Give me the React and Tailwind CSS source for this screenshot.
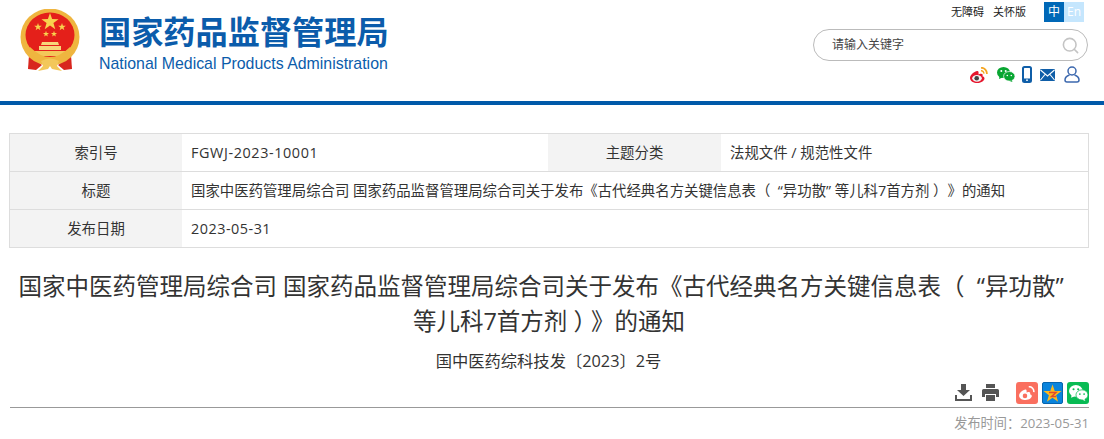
import React from 'react';
import { Search } from 'lucide-react';

const BASE = "font-['Open_Sans','Noto_Sans_CJK_SC',sans-serif]";

// points of a five pointed star
const star = (cx, cy, r) => {
  const pts = [];
  for (let i = 0; i < 10; i++) {
    const a = -Math.PI / 2 + (i * Math.PI) / 5;
    const d = i % 2 === 0 ? r : r * 0.4;
    pts.push(`${cx + d * Math.cos(a)},${cy + d * Math.sin(a)}`);
  }
  return pts.join(' ');
};

// --- Emblem ---
const Emblem = () => (
  <svg width="60" height="64" viewBox="0 0 60 64" className="shrink-0">
    <path d="M9 46 L8 60 L16 61 L22 56 Z" fill="#d8261e" />
    <path d="M51 46 L52 60 L44 61 L38 56 Z" fill="#d8261e" />
    <ellipse cx="30" cy="28" rx="29.5" ry="28.5" fill="#efb53f" />
    <ellipse cx="30" cy="26" rx="24.5" ry="22.5" fill="#e4201a" />
    <polygon points={star(30, 13, 9)} fill="#f8d24e" />
    <polygon points={star(18, 18, 4)} fill="#f8d24e" />
    <polygon points={star(42, 18, 4)} fill="#f8d24e" />
    <polygon points={star(26, 25, 3.2)} fill="#f8d24e" />
    <polygon points={star(34, 25, 3.2)} fill="#f8d24e" />
    <path d="M22 33 H38 L39 36 H21 Z" fill="#f7d77a" />
    <path d="M19 37 H41 V41 H19 Z" fill="#f7d77a" />
    <path d="M10 42 H50 L46 47 H14 Z" fill="#f3c75a" />
    <path d="M7 42 Q30 66 53 42 L50 38 Q30 58 10 38 Z" fill="#efb53f" />
    <path d="M21 52 Q30 47 39 52 L37 57 L42 62 L32 60 L30 57 L28 60 L18 62 L23 57 Z" fill="#f3c75a" />
  </svg>
);

const Weibo = () => (
  <svg width="18" height="16" viewBox="0 0 18 16">
    <path d="M7 4 C3 5 0 8.500 0 11 C0 14 3.500 16 7.500 16 C11.500 16 14.500 13.500 14.500 11.500 C14.500 9.800 13 9.500 12.500 9.300 C13 8 12.800 6.800 11 6.800 C10 6.800 9 7.300 8.500 7.500 C8.800 5.500 8.600 3.600 7 4 Z" fill="#e6162d" />
    <ellipse cx="7" cy="11.300" rx="4.800" ry="3.400" fill="#f4f4f4" />
    <circle cx="6.700" cy="11.300" r="2.300" fill="#444" />
    <path d="M11 .8 A5.500 5.500 0 0 1 16.800 7" stroke="#f5a623" strokeWidth="1.800" fill="none" />
    <path d="M11 3.800 A2.500 2.500 0 0 1 13.800 6.600" stroke="#f5a623" strokeWidth="1.500" fill="none" />
  </svg>
);

const Wechat = ({ w = 18, h = 15, color = '#09a632', eye = '#fff' }) => (
  <svg width={w} height={h} viewBox="0 0 18 15">
    <ellipse cx="6.500" cy="5.500" rx="6.500" ry="5.500" fill={color} />
    <path d="M2.500 9 L2 12 L5.500 10.500 Z" fill={color} />
    <ellipse cx="12.300" cy="9.300" rx="5.700" ry="4.800" fill={color} stroke={eye} strokeWidth="0.700" />
    <path d="M14.500 13 L15.500 15 L12.500 14 Z" fill={color} />
    <circle cx="4.300" cy="4" r="1" fill={eye} />
    <circle cx="8.700" cy="4" r="1" fill={eye} />
    <circle cx="10.300" cy="8.500" r="0.800" fill={eye} />
    <circle cx="14.300" cy="8.500" r="0.800" fill={eye} />
  </svg>
);

const Phone = () => (
  <svg width="10" height="17" viewBox="0 0 10 17">
    <rect x="1" y="1" width="8" height="15" rx="1.500" fill="none" stroke="#0f5ea8" strokeWidth="2" />
    <rect x="1" y="12.500" width="8" height="3.500" fill="#0f5ea8" />
    <circle cx="5" cy="14.200" r="0.900" fill="#fff" />
  </svg>
);

const MailIcon = () => (
  <svg width="15" height="12" viewBox="0 0 15 12">
    <rect width="15" height="12" rx="1" fill="#0f5ea8" />
    <path d="M0.500 1 L7.500 7 L14.500 1 M0.500 11 L5 5.500 M14.500 11 L10 5.500" stroke="#fff" strokeWidth="1.100" fill="none" />
  </svg>
);

const UserIcon = () => (
  <svg width="16" height="17" viewBox="0 0 16 17" fill="none" stroke="#3c68ae" strokeWidth="1.500">
    <circle cx="8" cy="5" r="4" />
    <path d="M5.500 9 C2.500 10 1 12 1 14 C1 15.500 2 16 3 16 H13 C14 16 15 15.500 15 14 C15 12 13.500 10 10.500 9" />
  </svg>
);

const DownloadIcon = () => (
  <svg width="17" height="17" viewBox="0 0 17 17" fill="#555">
    <path d="M6 0 H11 V6 H15 L8.500 12 L2 6 H6 Z" />
    <path d="M0 11 H2 V15 H15 V11 H17 V17 H0 Z" />
  </svg>
);

const PrinterIcon = () => (
  <svg width="17" height="17" viewBox="0 0 17 17" fill="#555">
    <path d="M4 0 H13 V4 H4 Z" />
    <path d="M1.500 5 H15.500 Q17 5 17 6.500 V13 H14 V10 H3 V13 H0 V6.500 Q0 5 1.500 5 Z" />
    <path d="M4 11 H13 V17 H4 Z" />
  </svg>
);

const QZone = () => (
  <span className="relative w-[21px] h-[22px] rounded-[2px] bg-[#0a84dc] border border-[#0664ad] flex items-center justify-center overflow-hidden">
    <svg width="19" height="19" viewBox="0 0 19 19">
      <polygon points={star(9.500, 10, 9.500)} fill="#fbb91f" />
      <path d="M6 8.500 H13 L8.500 12.500 H13" stroke="#e2492b" strokeWidth="1.400" fill="none" />
    </svg>
  </span>
);

const WeiboSolid = () => (
  <svg width="16" height="14" viewBox="0 0 18 16" fill="none">
    <path d="M7 4 C3 5 0 8.500 0 11 C0 14 3.500 16 7.500 16 C11.500 16 14.500 13.500 14.500 11.500 C14.500 9.800 13 9.500 12.500 9.300 C13 8 12.800 6.800 11 6.800 C10 6.800 9 7.300 8.500 7.500 C8.800 5.500 8.600 3.600 7 4 Z" fill="#fff" />
    <circle cx="6.700" cy="11.300" r="2.600" fill="#fa6f5f" />
    <path d="M11 .8 A5.500 5.500 0 0 1 16.800 7" stroke="#fff" strokeWidth="1.800" />
  </svg>
);

const TITLE_HEAD = '国家中医药管理局综合司 国家药品监督管理局综合司关于发布《古代经典名方关键信息表（ \u00a0“异功散”';

export default function App() {
  return (
    <div lang="zh-CN" className={`w-[1104px] h-[439px] overflow-hidden bg-white [text-spacing-trim:space-all] ${BASE}`}>
      {/* Header */}
      <div className="h-[105px] border-b-4 border-[#0059a9] flex justify-between">
        <div className="flex pl-[20px] pt-[9px]">
          <Emblem />
          <div className="ml-[19px] pt-[5px] text-[#0b5cab] font-['Liberation_Sans','Noto_Sans_CJK_SC',sans-serif]">
            <div className="text-[32.2px] leading-[38px] font-bold whitespace-nowrap">国家药品监督管理局</div>
            <div className="text-[15.9px] leading-[18px] mt-[3px] whitespace-nowrap">National Medical Products Administration</div>
          </div>
        </div>
        <div className="w-[290px] mr-[20px] flex flex-col items-end">
          <div className="flex items-start mt-[2px] text-[11px] leading-[16px] text-[#222]">
            <span className="mt-[2px] mr-[9px]">无障碍</span>
            <span className="mt-[2px] mr-[18px]">关怀版</span>
            <span className="w-[20px] h-[20px] bg-[#0068b7] text-white text-center leading-[20px] text-[12px]">中</span>
            <span className="w-[20px] h-[20px] bg-[#c5e6fd] text-white text-center leading-[20px] text-[12px]">En</span>
          </div>
          <div className="w-[275px] h-[32px] mt-[7px] mr-[-4px] rounded-full border border-[#bbb] flex items-center justify-between pl-[18px] pr-[7px] text-[12px] text-[#444]">
            <span>请输入关键字</span>
            <Search size={19} className="text-[#c4c4c4]" />
          </div>
          <div className="flex items-center mt-[5px] mr-[4px] h-[17px]">
            <Weibo />
            <span className="ml-[9px]"><Wechat /></span>
            <span className="ml-[7px]"><Phone /></span>
            <span className="ml-[8px]"><MailIcon /></span>
            <span className="ml-[9px]"><UserIcon /></span>
          </div>
        </div>
      </div>

      {/* Info table */}
      <div className="ml-[9px] mr-[15px] mt-[28px] h-[115px] border border-[#ddd] text-[14.4px] text-[#333]">
        <div className="flex h-[38px] border-b border-[#ddd]">
          <div className="w-[172px] pt-px bg-[#f3f3f3] flex items-center justify-center">索引号</div>
          <div className="w-[366px] pt-px flex items-center pl-[9px] tracking-[0.6px]">FGWJ-2023-10001</div>
          <div className="w-[173px] pt-px bg-[#f3f3f3] flex items-center justify-center">主题分类</div>
          <div className="flex-1 pt-px flex items-center pl-[9px]">法规文件 / 规范性文件</div>
        </div>
        <div className="flex h-[38px] border-b border-[#ddd]">
          <div className="w-[172px] pt-px bg-[#f3f3f3] flex items-center justify-center">标题</div>
          <div className="flex-1 pt-px flex items-center pl-[9px] whitespace-nowrap">
            <span>{TITLE_HEAD} 等儿科7首方剂 ）》的通知</span>
          </div>
        </div>
        <div className="flex h-[37px]">
          <div className="w-[172px] pt-px bg-[#f3f3f3] flex items-center justify-center">发布日期</div>
          <div className="flex-1 pt-px flex items-center pl-[9px] tracking-[0.5px]">2023-05-31</div>
        </div>
      </div>

      {/* Title */}
      <div className="pl-[10px] pr-[16px] mt-[21px] text-center text-[23.5px] leading-[35px] text-[#333]">
        {TITLE_HEAD}<span className="inline-block w-[16px]" />等儿科7首方剂 <span className="tracking-[-0.25em]">）</span>》的通知
      </div>
      <div className="pr-[7px] mt-[11px] text-center text-[16.3px] leading-[22px] text-[#333]">国中医药综科技发〔2023〕2号</div>

      {/* Share bar */}
      <div className="ml-[10px] mr-[15px] mt-[8px] h-[28px] border-b border-[#999] flex justify-end items-start pt-[2px]">
        <span className="mt-[2px] mr-[10px]"><DownloadIcon /></span>
        <span className="mt-[2px] mr-[17px]"><PrinterIcon /></span>
        <span className="w-[22px] h-[22px] mr-[4px] rounded-[3px] bg-[#fa6f5f] flex items-center justify-center"><WeiboSolid /></span>
        <span className="mr-[4px]"><QZone /></span>
        <span className="w-[22px] h-[22px] rounded-[3px] bg-[#09bb54] flex items-center justify-center"><Wechat w={19} h={16} color="#fff" eye="#09bb54" /></span>
      </div>
      <div className="mr-[15px] mt-[5px] text-right text-[13.2px] leading-[20px] text-[#999]">发布时间：2023-05-31</div>
    </div>
  );
}
